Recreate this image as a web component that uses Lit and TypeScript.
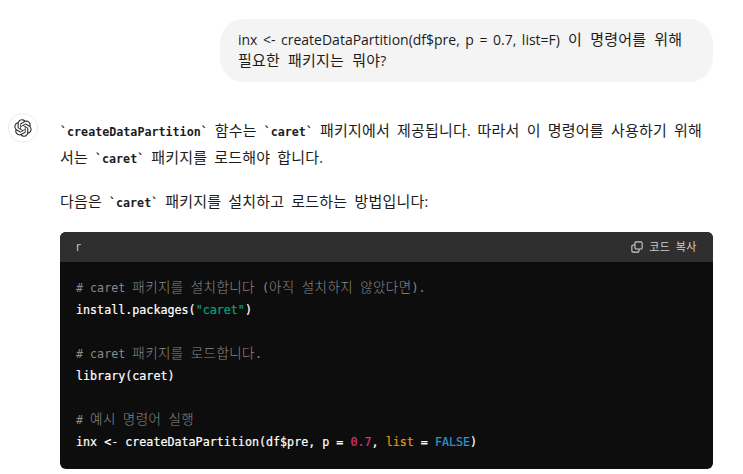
import { LitElement, html, css } from "lit";
import { customElement } from "lit/decorators.js";

const LOGO = "M37.5324 16.8707C37.9808 15.5241 38.1363 14.0974 37.9886 12.6859C37.8409 11.2744 37.3934 9.91076 36.676 8.68622C35.6126 6.83404 33.9882 5.3676 32.0373 4.4985C30.0864 3.62941 27.9098 3.40259 25.8215 3.85078C24.8796 2.7893 23.7219 1.94125 22.4257 1.36341C21.1295 0.785575 19.7249 0.491269 18.3058 0.500197C16.1708 0.495044 14.0893 1.16803 12.3614 2.42214C10.6335 3.67624 9.34853 5.44666 8.6917 7.47815C7.30085 7.76286 5.98686 8.3414 4.8377 9.17505C3.68854 10.0087 2.73073 11.0782 2.02839 12.312C0.956464 14.1591 0.498905 16.2988 0.721698 18.4228C0.944492 20.5467 1.83612 22.5449 3.268 24.1293C2.81966 25.4759 2.66413 26.9026 2.81182 28.3141C2.95951 29.7256 3.40701 31.0892 4.12437 32.3138C5.18791 34.1659 6.8123 35.6322 8.76321 36.5013C10.7141 37.3704 12.8907 37.5973 14.9789 37.1492C15.9208 38.2107 17.0786 39.0587 18.3747 39.6366C19.6709 40.2144 21.0755 40.5087 22.4946 40.4998C24.6307 40.5054 26.7133 39.8321 28.4418 38.5772C30.1704 37.3223 31.4556 35.5506 32.1119 33.5179C33.5027 33.2332 34.8167 32.6547 35.9659 31.821C37.115 30.9874 38.0728 29.9178 38.7752 28.684C39.8458 26.8371 40.3023 24.6979 40.0789 22.5748C39.8556 20.4517 38.9639 18.4544 37.5324 16.8707ZM22.4978 37.8849C20.7443 37.8874 19.0459 37.2733 17.6994 36.1501C17.7601 36.117 17.8666 36.0586 17.936 36.0161L25.9004 31.4156C26.1003 31.3019 26.2663 31.137 26.3813 30.9378C26.4964 30.7386 26.5563 30.5124 26.5549 30.2825V19.0542L29.9213 20.998C29.9389 21.0068 29.9541 21.0198 29.9656 21.0359C29.977 21.052 29.9842 21.0707 29.9867 21.0902V30.3889C29.9842 32.375 29.1946 34.2791 27.7909 35.6841C26.3872 37.0892 24.4838 37.8806 22.4978 37.8849ZM6.39227 31.0064C5.51397 29.4888 5.19742 27.7107 5.49804 25.9832C5.55718 26.0187 5.66048 26.0818 5.73461 26.1244L13.699 30.7248C13.8975 30.8408 14.1233 30.902 14.3532 30.902C14.583 30.902 14.8088 30.8408 15.0073 30.7248L24.731 25.1103V28.9979C24.7321 29.0177 24.7283 29.0376 24.7199 29.0556C24.7115 29.0736 24.6988 29.0893 24.6829 29.1012L16.6317 33.7497C14.9096 34.7416 12.8643 35.0097 10.9447 34.4954C9.02506 33.9811 7.38785 32.7263 6.39227 31.0064ZM4.29707 13.6194C5.17156 12.0998 6.55279 10.9364 8.19885 10.3327C8.19885 10.4013 8.19491 10.5228 8.19491 10.6071V19.808C8.19351 20.0378 8.25334 20.2638 8.36823 20.4629C8.48312 20.6619 8.64893 20.8267 8.84863 20.9404L18.5723 26.5542L15.206 28.4979C15.1894 28.5089 15.1703 28.5155 15.1505 28.5173C15.1307 28.5191 15.1107 28.516 15.0924 28.5082L7.04046 23.8557C5.32135 22.8601 4.06716 21.2235 3.55289 19.3046C3.03862 17.3858 3.30624 15.3413 4.29707 13.6194ZM31.955 20.0556L22.2312 14.4411L25.5976 12.4981C25.6142 12.4872 25.6333 12.4805 25.6531 12.4787C25.6729 12.4769 25.6928 12.4801 25.7111 12.4879L33.7631 17.1364C34.9967 17.849 36.0017 18.8982 36.6606 20.1613C37.3194 21.4244 37.6047 22.849 37.4832 24.2684C37.3617 25.6878 36.8382 27.0432 35.9743 28.1759C35.1103 29.3086 33.9415 30.1717 32.6047 30.6641C32.6047 30.5947 32.6047 30.4733 32.6047 30.3889V21.188C32.6066 20.9586 32.5474 20.7328 32.4332 20.5338C32.319 20.3348 32.154 20.1698 31.955 20.0556ZM35.3055 15.0128C35.2464 14.9765 35.1431 14.9142 35.069 14.8717L27.1045 10.2712C26.906 10.1554 26.6803 10.0943 26.4504 10.0943C26.2206 10.0943 25.9948 10.1554 25.7963 10.2712L16.0726 15.8858V11.9982C16.0715 11.9783 16.0753 11.9585 16.0837 11.9405C16.0921 11.9225 16.1048 11.9068 16.1207 11.8949L24.1719 7.25025C25.4053 6.53903 26.8158 6.19376 28.2383 6.25482C29.6608 6.31589 31.0364 6.78077 32.2044 7.59508C33.3723 8.40939 34.2842 9.53945 34.8334 10.8531C35.3826 12.1667 35.5464 13.6095 35.3055 15.0128ZM14.2424 21.9419L10.8752 19.9981C10.8576 19.9893 10.8423 19.9763 10.8309 19.9602C10.8195 19.9441 10.8122 19.9254 10.8098 19.9058V10.6071C10.8107 9.18295 11.2173 7.78848 11.9819 6.58696C12.7466 5.38544 13.8377 4.42659 15.1275 3.82264C16.4173 3.21869 17.8524 2.99464 19.2649 3.1767C20.6775 3.35876 22.0089 3.93941 23.1034 4.85067C23.0427 4.88379 22.937 4.94215 22.8668 4.98473L14.9024 9.58517C14.7025 9.69878 14.5366 9.86356 14.4215 10.0626C14.3065 10.2616 14.2466 10.4877 14.2479 10.7175L14.2424 21.9419ZM16.071 17.9991L20.4018 15.4978L24.7325 17.9975V22.9985L20.4018 25.4983L16.071 22.9985V17.9991Z";

@customElement("app-root")
export class AppRoot extends LitElement {
  static styles = css`
    :host {
      display: block;
      width: 743px;
      height: 474px;
      overflow: hidden;
      background: #fff;
      color: #1c1c1c;
      font-family: "Open Sans", "Noto Sans CJK KR", sans-serif;
      font-size: 14px;
      line-height: 21px;
    }
    .page {
      display: flex;
      flex-direction: column;
      padding: 19px 30px 0 8px;
      gap: 31px;
    }
    .bubble {
      align-self: flex-end;
      box-sizing: border-box;
      width: 493px;
      height: 63px;
      padding: 10px 18px;
      background: #f4f4f4;
      border-radius: 24px;
      white-space: nowrap;
      word-spacing: 1.9px;
    }
    .bubble .ko {
      word-spacing: 4px;
    }
    .ko {
      font-size: 15px;
      line-height: 0;
      letter-spacing: 0.2px;
      word-spacing: 3px;
    }
    .turn {
      display: flex;
      gap: 22px;
    }
    .avatar {
      flex: none;
      box-sizing: border-box;
      width: 30px;
      height: 30px;
      border: 1px solid #ececec;
      border-radius: 50%;
      display: flex;
      align-items: center;
      justify-content: center;
    }
    .avatar svg {
      width: 18px;
      height: 18px;
      fill: #333;
    }
    .content {
      width: 653px;
      flex: none;
      padding-top: 3.5px;
    }
    p {
      margin: 0 0 17px;
      line-height: 27px;
      white-space: nowrap;
      word-spacing: 3.3px;
    }
    code {
      font-family: "DejaVu Sans Mono", monospace;
      font-weight: 700;
      font-size: 11.7px;
      line-height: 1;
    }
    .code {
      border-radius: 6px;
      overflow: hidden;
      background: #0d0d0d;
      height: 237px;
    }
    .bar {
      height: 30px;
      box-sizing: border-box;
      background: #2f2f2f;
      color: #cdcdcd;
      display: flex;
      align-items: center;
      justify-content: space-between;
      padding: 0 16px;
      font-size: 12px;
    }
    .copy {
      display: flex;
      align-items: center;
      gap: 6px;
      font-size: 11px;
      letter-spacing: 0.5px;
      word-spacing: 2px;
    }
    .copy svg {
      width: 12px;
      height: 12px;
      fill: none;
      stroke: #cdcdcd;
      stroke-width: 1.3;
    }
    pre {
      margin: 0;
      padding: 15px 16px 0;
      font-family: "DejaVu Sans Mono", "Noto Sans CJK KR", monospace;
      font-size: 11.7px;
      line-height: 22px;
      color: #fff;
      -webkit-text-stroke: 0.2px currentColor;
    }
    .cm {
      color: #8a8a8a;
      -webkit-text-stroke: 0;
    }
    .kc {
      font-size: 13.5px;
      line-height: 0;
      letter-spacing: 0.42px;
      font-weight: 300;
    }
    .str { color: #00a67d; }
    .num { color: #df3079; }
    .kw { color: #e9950c; }
    .lit { color: #2e95d3; }
  `;

  render() {
    return html`
      <div class="page">
        <div class="bubble">inx &lt;- createDataPartition(df$pre, p = 0.7, list=F)<span class="ko"> 이 명령어를 위해</span><br /><span class="ko">필요한 패키지는 뭐야</span>?</div>
        <div class="turn">
          <div class="avatar">
            <svg viewBox="0 0 41 41"><path d="${LOGO}"></path></svg>
          </div>
          <div class="content">
            <p><code>\`createDataPartition\`</code> <span class="ko">함수는</span> <code>\`caret\`</code> <span class="ko">패키지에서 제공됩니다</span>. <span class="ko">따라서 이 명령어를 사용하기 위해</span><br /><span class="ko">서는</span> <code>\`caret\`</code> <span class="ko">패키지를 로드해야 합니다</span>.</p>
            <p><span class="ko">다음은</span> <code>\`caret\`</code> <span class="ko">패키지를 설치하고 로드하는 방법입니다</span>:</p>
            <div class="code">
              <div class="bar">
                <span>r</span>
                <span class="copy">
                  <svg viewBox="0 0 14 14"><rect x="4.6" y="1" width="8.4" height="8.4" rx="1.6"></rect><path d="M4.6 4.6H2.6A1.6 1.6 0 0 0 1 6.2V11.4A1.6 1.6 0 0 0 2.6 13H7.8A1.6 1.6 0 0 0 9.4 11.4V9.4"></path></svg>
                  코드 복사
                </span>
              </div>
<pre><span class="cm"># caret <span class="kc">패키지를</span> <span class="kc">설치합니다</span> (<span class="kc">아직</span> <span class="kc">설치하지</span> <span class="kc">않았다면</span>).</span>
install.packages(<span class="str">"caret"</span>)

<span class="cm"># caret <span class="kc">패키지를</span> <span class="kc">로드합니다</span>.</span>
library(caret)

<span class="cm"># <span class="kc">예시</span> <span class="kc">명령어</span> <span class="kc">실행</span></span>
inx &lt;- createDataPartition(df$pre, p = <span class="num">0.7</span>, <span class="kw">list</span> = <span class="lit">FALSE</span>)</pre>
            </div>
          </div>
        </div>
      </div>
    `;
  }
}
